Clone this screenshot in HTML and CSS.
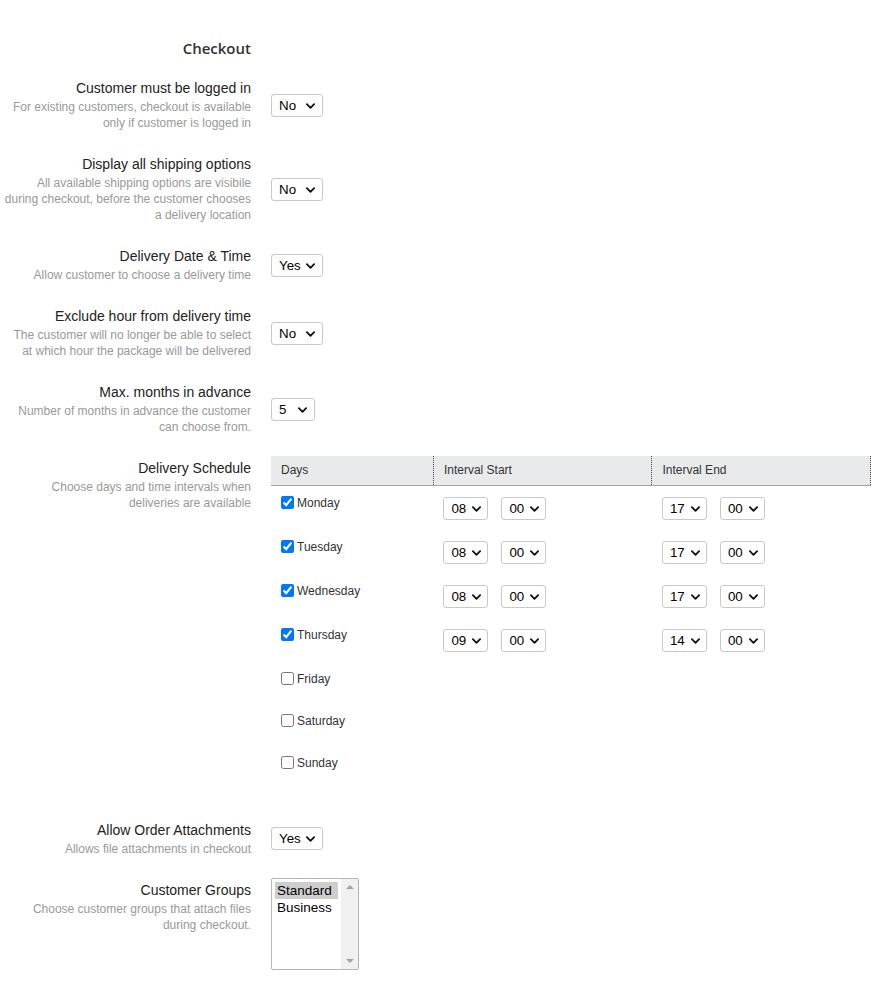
FILE: index.html
```html
<!DOCTYPE html>
<html>
<head>
<meta charset="utf-8">
<link rel="stylesheet" href="styles.css">
</head>
<body>
<div class="page">
  <div class="title-row"><h2 class="section-title">Checkout</h2></div>

  <div class="field">
    <div class="label">
      <div class="name">Customer must be logged in</div>
      <div class="desc">For existing customers, checkout is available<br>only if customer is logged in</div>
    </div>
    <div class="select w-yn"><select><option>No</option><option>Yes</option></select><svg class="chev" viewBox="0 0 10 6"><path d="M1 1l4 4 4-4"/></svg></div>
  </div>

  <div class="field">
    <div class="label">
      <div class="name">Display all shipping options</div>
      <div class="desc">All available shipping options are visibile<br>during checkout, before the customer chooses<br>a delivery location</div>
    </div>
    <div class="select w-yn"><select><option>No</option><option>Yes</option></select><svg class="chev" viewBox="0 0 10 6"><path d="M1 1l4 4 4-4"/></svg></div>
  </div>

  <div class="field">
    <div class="label">
      <div class="name">Delivery Date &amp; Time</div>
      <div class="desc">Allow customer to choose a delivery time</div>
    </div>
    <div class="select w-yn"><select><option>Yes</option><option>No</option></select><svg class="chev" viewBox="0 0 10 6"><path d="M1 1l4 4 4-4"/></svg></div>
  </div>

  <div class="field">
    <div class="label">
      <div class="name">Exclude hour from delivery time</div>
      <div class="desc">The customer will no longer be able to select<br>at which hour the package will be delivered</div>
    </div>
    <div class="select w-yn"><select><option>No</option><option>Yes</option></select><svg class="chev" viewBox="0 0 10 6"><path d="M1 1l4 4 4-4"/></svg></div>
  </div>

  <div class="field">
    <div class="label">
      <div class="name">Max. months in advance</div>
      <div class="desc">Number of months in advance the customer<br>can choose from.</div>
    </div>
    <div class="select w-num"><select><option>5</option></select><svg class="chev" viewBox="0 0 10 6"><path d="M1 1l4 4 4-4"/></svg></div>
  </div>

  <div class="field field-top field-schedule">
    <div class="label">
      <div class="name">Delivery Schedule</div>
      <div class="desc">Choose days and time intervals when<br>deliveries are available</div>
    </div>
    <table class="schedule">
      <thead>
        <tr><th class="c-day">Days</th><th class="c-time">Interval Start</th><th class="c-time c-last">Interval End</th></tr>
      </thead>
      <tbody id="rows"></tbody>
    </table>
  </div>

  <div class="field">
    <div class="label">
      <div class="name">Allow Order Attachments</div>
      <div class="desc">Allows file attachments in checkout</div>
    </div>
    <div class="select w-yn"><select><option>Yes</option><option>No</option></select><svg class="chev" viewBox="0 0 10 6"><path d="M1 1l4 4 4-4"/></svg></div>
  </div>

  <div class="field field-top">
    <div class="label">
      <div class="name">Customer Groups</div>
      <div class="desc">Choose customer groups that attach files<br>during checkout.</div>
    </div>
    <div class="listbox">
      <ul class="options">
        <li class="opt selected">Standard</li>
        <li class="opt">Business</li>
      </ul>
      <div class="scrollbar"><span class="arr up"></span><span class="arr down"></span></div>
    </div>
  </div>
</div>
<script src="script.js"></script>
</body>
</html>
```

FILE: script.js
```js
const days = [
  ["Monday", true, "08", "00", "17", "00"],
  ["Tuesday", true, "08", "00", "17", "00"],
  ["Wednesday", true, "08", "00", "17", "00"],
  ["Thursday", true, "09", "00", "14", "00"],
  ["Friday", false],
  ["Saturday", false],
  ["Sunday", false]
];
const chev = '<svg class="chev" viewBox="0 0 10 6"><path d="M1 1l4 4 4-4"/></svg>';
const sel = v => `<div class="select w-time"><select><option>${v}</option></select>${chev}</div>`;
const tbody = document.getElementById("rows");
tbody.innerHTML = days.map(d => {
  const [name, on] = d;
  const start = on ? `<div class="pair">${sel(d[2])}${sel(d[3])}</div>` : "";
  const end = on ? `<div class="pair">${sel(d[4])}${sel(d[5])}</div>` : "";
  return `<tr><td class="c-day"><label class="day"><input type="checkbox"${on ? " checked" : ""}>${name}</label></td><td class="c-time">${start}</td><td class="c-time">${end}</td></tr>`;
}).join("");
```

FILE: styles.css
```css
* { box-sizing: border-box; }
body {
  margin: 0;
  background: #fff;
  font-family: "Liberation Sans", Arial, sans-serif;
  color: #333;
}
.page {
  padding-top: 38px;
  padding-bottom: 20px;
}
.title-row {
  width: 251px;
  text-align: right;
  margin-bottom: 20px;
}
.section-title {
  margin: 0;
  font-family: "Open Sans", sans-serif;
  font-weight: 600;
  font-size: 15px;
  line-height: 21px;
  color: #333;
}
.field {
  display: flex;
  align-items: center;
  gap: 20px;
  margin-bottom: 24px;
}
.field-top { align-items: flex-start; margin-top: -3px; }
.field-top .label { padding-top: 3px; }
.field-schedule { margin-bottom: 33px; }
.label {
  width: 251px;
  flex-shrink: 0;
  text-align: right;
}
.name {
  font-size: 14px;
  line-height: 18px;
  color: #222;
}
.desc {
  margin-top: 2px;
  font-size: 12px;
  line-height: 16px;
  color: #999;
}
.select {
  position: relative;
  display: inline-block;
  height: 23px;
}
.select select {
  appearance: none;
  -webkit-appearance: none;
  display: block;
  width: 100%;
  height: 100%;
  margin: 0;
  padding: 0 0 0 7px;
  border: 1px solid #c9c9c9;
  border-radius: 3px;
  background: #fff;
  font-family: "Liberation Sans", Arial, sans-serif;
  font-size: 13.33px;
  color: #000;
}
.chev {
  position: absolute;
  right: 8px;
  top: 9px;
  width: 9px;
  height: 6px;
  pointer-events: none;
}
.chev path {
  fill: none;
  stroke: #111;
  stroke-width: 2;
  stroke-linecap: round;
  stroke-linejoin: round;
}
.w-yn { width: 52px; }
.w-num { width: 44px; }
.w-time { width: 45px; }
.w-time .chev { right: 7px; }

.schedule {
  width: 600px;
  border-collapse: collapse;
  font-size: 12px;
  color: #333;
}
.schedule th {
  height: 29px;
  padding: 0 10px;
  text-align: left;
  font-weight: normal;
  background: #e9eaeb;
  border-bottom: 1px solid #a5a5a5;
}
.schedule th + th { border-left: 1px dotted #444; }
.schedule th.c-last { border-right: 1px dotted #444; }
.c-day { width: 162px; }
.c-time { width: 218px; }
.schedule td { vertical-align: top; }
.schedule td.c-day { padding: 8px 10px 16px; }
.schedule td.c-time { padding: 11px 10px 10px; }
.day {
  display: flex;
  align-items: center;
  gap: 3px;
  height: 18px;
  line-height: 18px;
}
.day input {
  width: 13px;
  height: 13px;
  margin: 0;
  accent-color: #0075ff;
}
.pair {
  display: flex;
  gap: 13px;
}

.listbox {
  display: flex;
  width: 88px;
  height: 92px;
  border: 1px solid #b5b5b5;
  border-radius: 2px;
  overflow: hidden;
}
.options {
  flex: 1;
  list-style: none;
  margin: 0;
  padding: 3px 3px 0 3px;
  font-size: 13.5px;
  line-height: 17px;
  color: #000;
}
.opt { padding-left: 2px; }
.opt.selected { background: #cecece; }
.scrollbar {
  width: 17px;
  background: #f1f1f1;
  display: flex;
  flex-direction: column;
  justify-content: space-between;
  align-items: center;
  padding: 6px 0;
}
.arr {
  width: 0;
  height: 0;
  border-left: 4px solid transparent;
  border-right: 4px solid transparent;
}
.arr.up { border-bottom: 4px solid #a3a3a3; }
.arr.down { border-top: 4px solid #a3a3a3; }
```
